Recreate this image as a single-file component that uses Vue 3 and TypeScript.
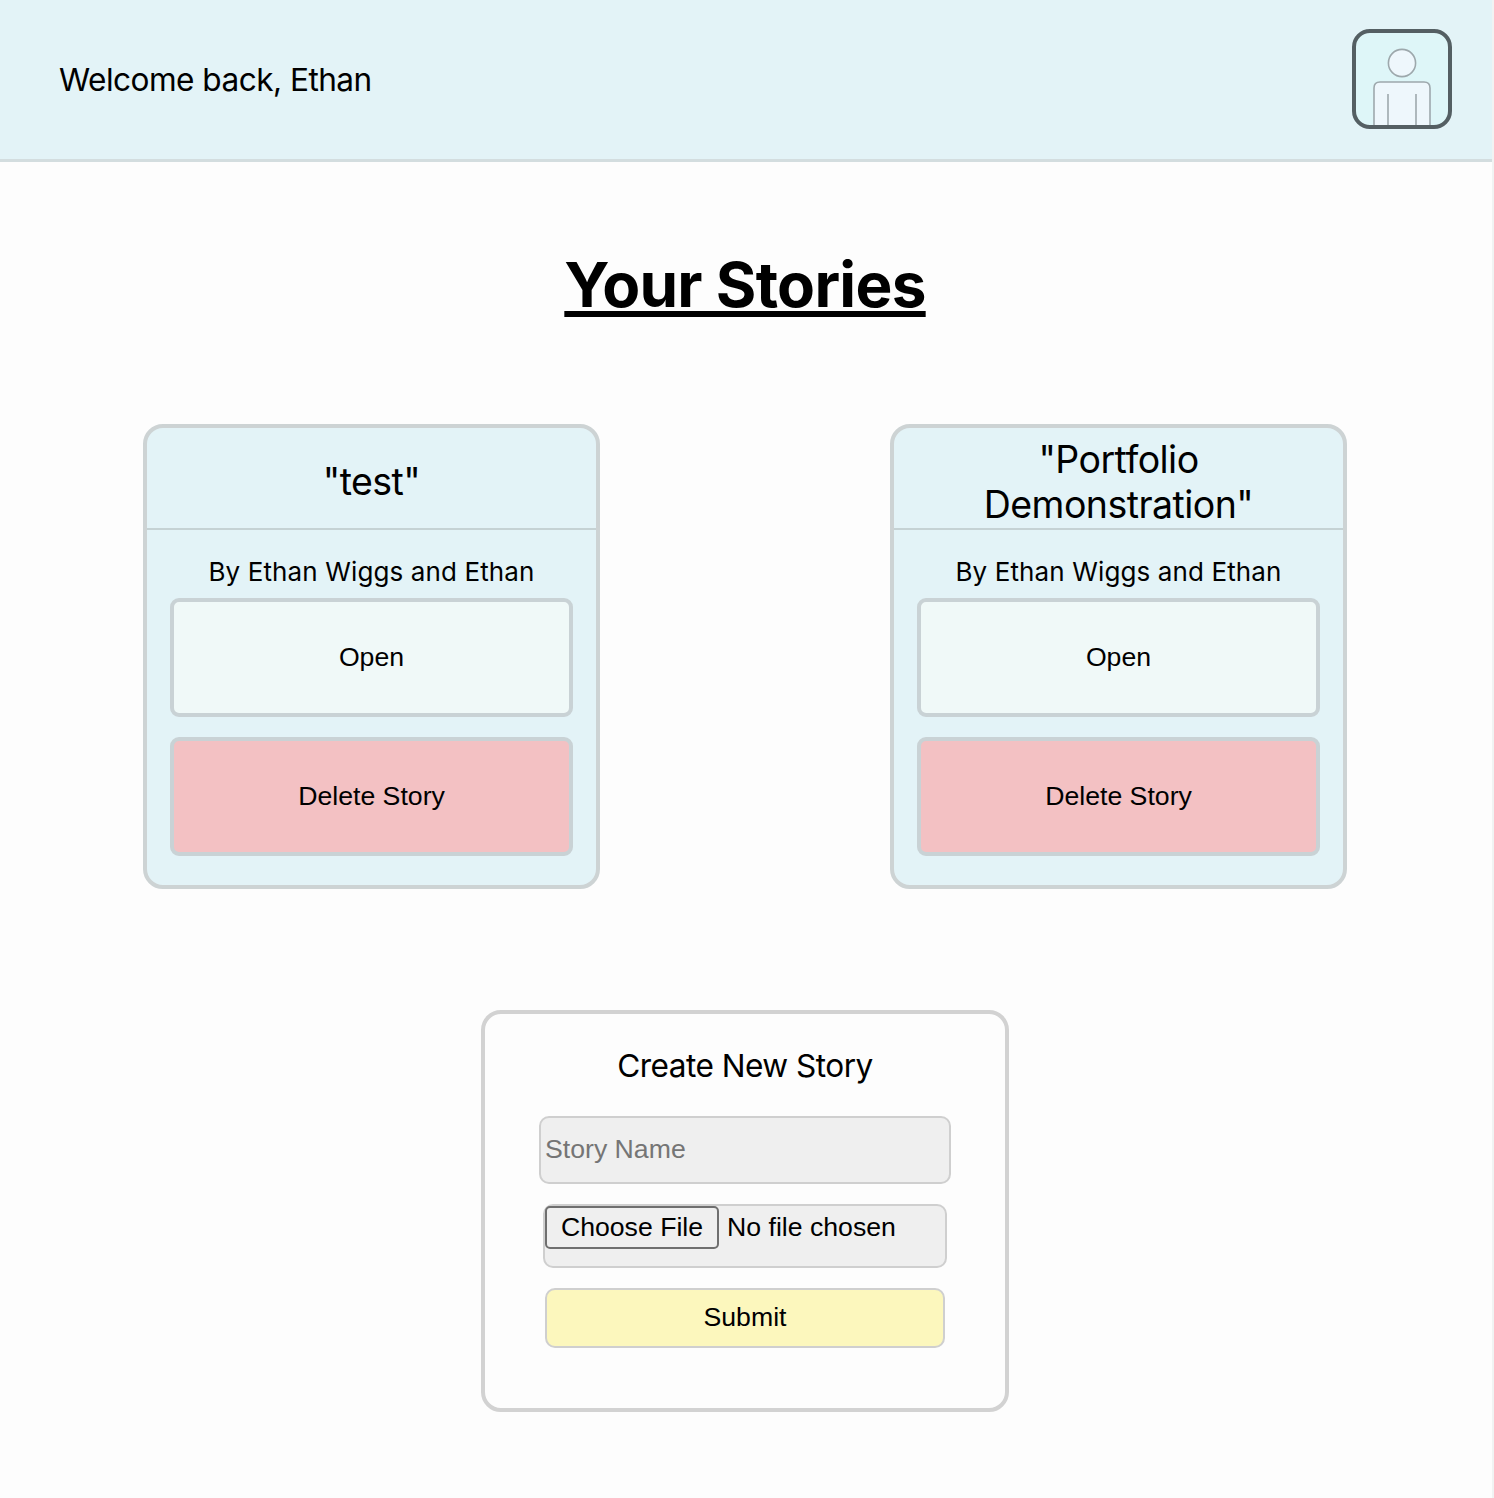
<script setup lang="ts">
interface Story {
  title: string[]
  authors: string
}

const userName = 'Ethan'
const stories: Story[] = [
  { title: ['"test"'], authors: 'Ethan Wiggs and Ethan' },
  { title: ['"Portfolio', 'Demonstration"'], authors: 'Ethan Wiggs and Ethan' },
]
</script>

<template>
  <div class="page">
    <header class="topbar">
      <p class="welcome">Welcome back, {{ userName }}</p>
      <button class="avatar" type="button" aria-label="Account">
        <svg width="92" height="92" viewBox="0 0 92 92" fill="#eef7fc" stroke="#9da8ac" stroke-width="1.6">
          <circle cx="46" cy="30" r="13.6" />
          <path d="M18 94V55q0-6 6-6H68q6 0 6 6V94" />
          <path d="M32 61V94M60 61V94" />
        </svg>
      </button>
    </header>

    <main class="content">
      <h1 class="heading">Your Stories</h1>

      <section class="stories">
        <article v-for="story in stories" :key="story.title[0]" class="card">
          <h2 class="card-title">
            <span v-for="line in story.title" :key="line">{{ line }}</span>
          </h2>
          <p class="authors">By {{ story.authors }}</p>
          <button class="action" type="button">Open</button>
          <button class="action danger" type="button">Delete Story</button>
        </article>
      </section>

      <form class="create" @submit.prevent>
        <p class="create-title">Create New Story</p>
        <input class="name" type="text" placeholder="Story Name" />
        <label class="file">
          <span class="choose">Choose File</span>
          <span class="none">No file chosen</span>
        </label>
        <button class="submit" type="submit">Submit</button>
      </form>
    </main>
  </div>
</template>

<style>
body {
  background: #fdfdfd;
}
</style>

<style scoped>
.page {
  box-sizing: border-box;
  width: 1494px;
  height: 1498px;
  overflow: hidden;
  border-right: 2px solid #f1f3f3;
  font-family: Inter, "Liberation Sans", sans-serif;
  color: #000;
}

.page * {
  box-sizing: border-box;
}

p,
h1,
h2 {
  margin: 0;
  font-weight: 400;
}

button,
input {
  padding: 0;
  font-family: "Liberation Sans", sans-serif;
  font-size: 26.67px;
  color: #000;
}

.topbar {
  display: flex;
  align-items: center;
  justify-content: space-between;
  height: 162px;
  padding: 0 40px 2px 59px;
  border-bottom: 3px solid #d3dddf;
  background: #e3f3f7;
}

.welcome {
  padding-top: 2px;
  font-size: 31.6px;
  line-height: 40px;
  letter-spacing: -0.53px;
}

.avatar {
  width: 100px;
  height: 100px;
  border: 4px solid #545f63;
  border-radius: 18px;
  background: #def6f8;
  overflow: hidden;
}

.avatar svg {
  display: block;
}

.content {
  display: flex;
  flex-direction: column;
  align-items: center;
  width: 1490px;
  padding-top: 83px;
}

.heading {
  font-size: 62px;
  font-weight: 700;
  line-height: 80px;
  letter-spacing: -0.72px;
  text-decoration: underline;
  text-decoration-thickness: 6px;
  text-decoration-skip-ink: none;
  text-underline-offset: 4px;
}

.stories {
  display: flex;
  justify-content: space-between;
  width: 1204px;
  margin-top: 99px;
}

.card {
  display: flex;
  flex-direction: column;
  align-items: center;
  width: 457px;
  height: 465px;
  border: 4px solid #cdd3d4;
  border-radius: 20px;
  background: #e3f3f7;
}

.card-title {
  display: flex;
  flex-direction: column;
  justify-content: flex-end;
  align-items: center;
  width: 100%;
  height: 102px;
  padding-bottom: 1px;
  border-bottom: 2px solid #c5d2d4;
  font-size: 37.5px;
  line-height: 45px;
  letter-spacing: -0.55px;
}

.card-title span:only-child {
  margin-bottom: 23px;
}

.authors {
  margin-top: 26px;
  font-size: 26px;
  line-height: 32px;
  letter-spacing: 0.12px;
}

.action {
  width: 403px;
  height: 119px;
  margin-top: 10px;
  border: 4px solid #c9d2d5;
  border-radius: 9px;
  background: #f0f9f8;
}

.action.danger {
  margin-top: 20px;
  background: #f3c1c3;
}

.create {
  display: flex;
  flex-direction: column;
  align-items: center;
  width: 528px;
  height: 402px;
  margin-top: 121px;
  border: 4px solid #d2d2d2;
  border-radius: 20px;
}

.create-title {
  margin-top: 32px;
  font-size: 31.6px;
  line-height: 40px;
  letter-spacing: -0.53px;
}

.name {
  width: 412px;
  height: 68px;
  margin-top: 30px;
  padding: 0 4px 2px;
  border: 2px solid #cfcfcf;
  border-radius: 10px;
  background: #efefef;
}

.name::placeholder {
  color: #757575;
}

.file {
  display: flex;
  align-items: flex-start;
  width: 404px;
  height: 64px;
  margin-top: 20px;
  border: 2px solid #cfcfcf;
  border-radius: 10px;
  background: #efefef;
  font-family: "Liberation Sans", sans-serif;
  font-size: 26.67px;
}

.choose {
  width: 174px;
  height: 43px;
  border: 2px solid #6f6f6f;
  border-radius: 5px;
  line-height: 38px;
  text-align: center;
}

.none {
  margin-left: 8px;
  line-height: 42px;
}

.submit {
  width: 400px;
  height: 60px;
  margin-top: 20px;
  padding-bottom: 2px;
  border: 2px solid #cfcfcf;
  border-radius: 10px;
  background: #fcf7bd;
}
</style>
